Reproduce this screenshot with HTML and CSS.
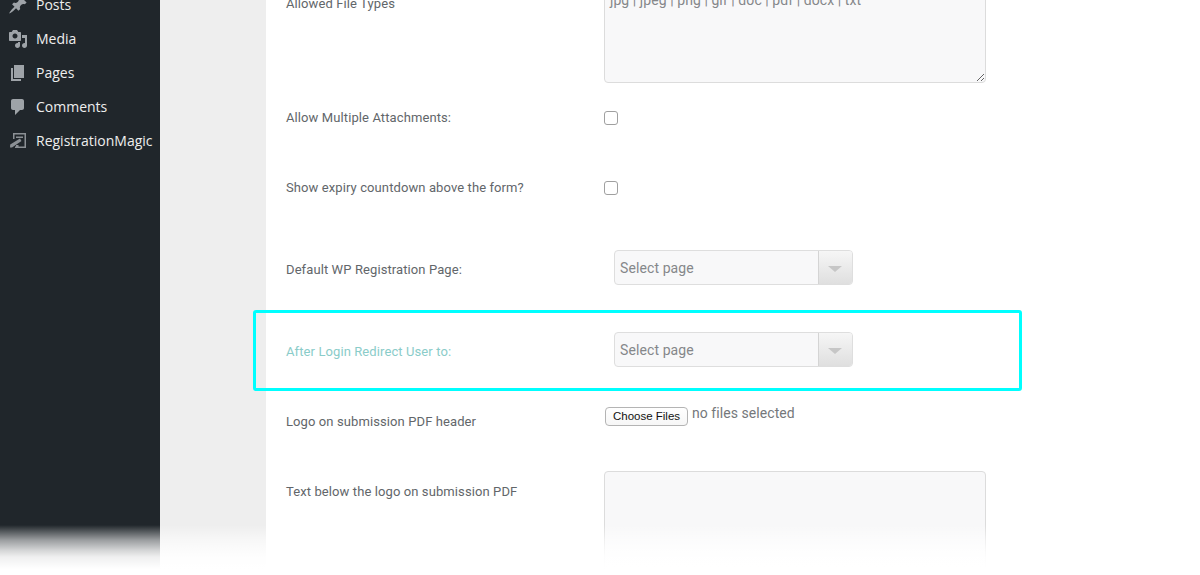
FILE: index.html
```html
<!DOCTYPE html>
<html lang="en">
<head>
<meta charset="utf-8">
<title>Global Settings</title>
<link rel="stylesheet" href="styles.css">
</head>
<body>
<div class="page">
  <nav class="sidebar">
    <ul class="menu">
      <li class="menu-item"><svg class="menu-icon" viewBox="0 0 20 20"><path d="M10.44 3.02l1.82-1.82 6.36 6.35-1.83 1.82c-1.05-.68-2.48-.57-3.41.36l-.75.75c-.92.93-1.04 2.35-.35 3.41l-1.83 1.82-2.41-2.41-2.8 2.79c-.42.42-3.38 2.71-3.8 2.29s1.86-3.39 2.28-3.81l2.79-2.79L4.1 9.36l1.83-1.82c1.05.69 2.48.57 3.4-.36l.75-.75c.93-.92 1.05-2.35.36-3.41z"/></svg>Posts</li>
      <li class="menu-item"><svg class="menu-icon" viewBox="0 0 20 20"><path d="M13 11V4c0-.55-.45-1-1-1h-1.67L9 1H5L3.67 3H2c-.55 0-1 .45-1 1v7c0 .55.45 1 1 1h10c.55 0 1-.45 1-1zM7 4.5c1.38 0 2.5 1.12 2.5 2.5S8.38 9.5 7 9.5 4.5 8.38 4.5 7 5.62 4.5 7 4.5zM14 6h5v10.5c0 1.38-1.12 2.5-2.5 2.5S14 17.88 14 16.5s1.12-2.5 2.5-2.5c.17 0 .34.02.5.05V9h-3V6zm-4 8.05V13h2v3.5c0 1.38-1.12 2.5-2.5 2.5S7 17.88 7 16.5 8.12 14 9.5 14c.17 0 .34.02.5.05z"/></svg>Media</li>
      <li class="menu-item"><svg class="menu-icon" viewBox="0 0 20 20"><path d="M6 15V2h10v13H6zm-1 1h8v2H3V5h2v11z"/></svg>Pages</li>
      <li class="menu-item"><svg class="menu-icon" viewBox="0 0 20 20"><path d="M5 2h9c1.1 0 2 .9 2 2v7c0 1.1-.9 2-2 2h-2l-5 5v-5H5c-1.1 0-2-.9-2-2V4c0-1.1.9-2 2-2z"/></svg>Comments</li>
      <li class="menu-item"><svg class="menu-icon rm-icon" viewBox="0 0 20 20"><path d="M4 2h13v15H6v-1.500h9.500V3.500h-10V8H4zM7 5.500h7V7H7zM1.200 13.500L11 7.500l1.500 2.500L3 16.500H1zM7 14h2.500v1.500H7z"/></svg>RegistrationMagic</li>
    </ul>
  </nav>
  <div class="gutter"></div>
  <main class="content">
    <form class="form">
      <div class="row row-types">
        <label class="label label-types">Allowed File Types</label>
        <textarea class="area area-types" readonly>jpg | jpeg | png | gif | doc | pdf | docx | txt</textarea>
      </div>
      <div class="row row-multi">
        <label class="label">Allow Multiple Attachments:</label>
        <input class="check" type="checkbox">
      </div>
      <div class="row row-expiry">
        <label class="label">Show expiry countdown above the form?</label>
        <input class="check" type="checkbox">
      </div>
      <div class="row row-reg">
        <label class="label label-low">Default WP Registration Page:</label>
        <div class="select"><span class="select-text">Select page</span><span class="select-arrow"></span></div>
      </div>
      <div class="row row-login">
        <label class="label label-low label-teal">After Login Redirect User to:</label>
        <div class="select"><span class="select-text">Select page</span><span class="select-arrow"></span></div>
      </div>
      <div class="row row-logo">
        <label class="label label-logo">Logo on submission PDF header</label>
        <div class="file">
          <button class="file-button" type="button">Choose Files</button>
          <span class="file-text">no files selected</span>
        </div>
      </div>
      <div class="row row-text">
        <label class="label label-text">Text below the logo on submission PDF</label>
        <textarea class="area area-text" readonly></textarea>
      </div>
    </form>
  </main>
  <div class="highlight"></div>
  <div class="fade"></div>
</div>
</body>
</html>
```

FILE: styles.css
```css
* { box-sizing: border-box; }

html, body {
  margin: 0;
  height: 575px;
  overflow: hidden;
  background: #fff;
}

.page {
  position: relative;
  display: flex;
  width: 1200px;
  height: 575px;
  overflow: hidden;
  font-family: Roboto, "Liberation Sans", sans-serif;
}

.sidebar {
  flex: 0 0 160px;
  background: #20262b;
}

.menu {
  list-style: none;
  margin: -12px 0 0;
  padding: 0;
}

.menu-item {
  display: flex;
  align-items: center;
  height: 34px;
  padding-left: 8px;
  font: 14px/34px "Open Sans", sans-serif;
  color: #eeeeee;
}

.menu-icon {
  flex: none;
  width: 20px;
  height: 20px;
  margin-right: 8px;
  fill: #9ea3a8;
}

.rm-icon { margin-left: 1px; margin-right: 7px; fill: #8b9095; }

.gutter {
  flex: 0 0 106px;
  background: #eeeeee;
}

.content {
  flex: 1;
  background: #fff;
  padding-left: 20px;
}

.form {
  margin-top: -18px;
}

.row {
  display: grid;
  grid-template-columns: 318px 382px;
  align-items: center;
}

.row-types { height: 101px; align-items: start; }
.row-multi { height: 69px; }
.row-expiry { height: 71px; }
.row-reg { height: 89px; }
.row-login { height: 75px; }
.row-logo { height: 84px; align-items: start; }
.row-text { height: 120px; align-items: start; }

.label {
  font-size: 13px;
  line-height: 20px;
  letter-spacing: 0.1px;
  color: #62666a;
}

.label-types { padding-top: 12px; }
.label-low { padding-top: 5px; }
.label-logo { padding-top: 25px; }
.label-text { padding-top: 11px; }
.label-teal { color: #8accc9; }

.area {
  display: block;
  width: 382px;
  margin: 0;
  padding: 6px 5px;
  border: 1px solid #dcdcdc;
  border-radius: 4px;
  background: #f8f8f9;
  font: 14px/20px Roboto, sans-serif;
  letter-spacing: 0.07px;
  color: #85878a;
  outline: none;
}

.area-types { height: 101px; padding-top: 7px; }
.area-text { height: 120px; }

.check {
  appearance: none;
  display: block;
  width: 14px;
  height: 14px;
  margin: 0;
  border: 1px solid #a0a0a0;
  border-radius: 3px;
  background: #fff;
}

.select {
  display: flex;
  width: 239px;
  height: 35px;
  margin-left: 10px;
  border: 1px solid #dedede;
  border-radius: 4px;
  background: #f8f8f9;
  overflow: hidden;
}

.select-text {
  flex: 1;
  padding-left: 5px;
  font-size: 14px;
  line-height: 35px;
  letter-spacing: 0.1px;
  color: #85878a;
}

.select-arrow {
  position: relative;
  flex: 0 0 34px;
  border-left: 1px solid #d4d4d4;
  background: linear-gradient(#f6f6f6, #dfdfdf);
}

.select-arrow::after {
  content: "";
  position: absolute;
  left: 9px;
  top: 15px;
  border-style: solid;
  border-width: 6px 7px 0;
  border-color: #c6c6c6 transparent transparent;
}

.file {
  display: flex;
  align-items: flex-start;
  padding-top: 17px;
}

.file-button {
  width: 83px;
  height: 19px;
  margin: 3px 4px 0 1px;
  padding: 0;
  border: 1px solid #b4b4b4;
  border-radius: 4px;
  background: linear-gradient(#ffffff, #f6f6f6);
  font: 11.500px/17px "Liberation Sans", sans-serif;
  color: #111;
}

.file-text {
  font-size: 14px;
  line-height: 18px;
  letter-spacing: 0.06px;
  color: #75787b;
}

.highlight {
  position: absolute;
  left: 253px;
  top: 310px;
  width: 769px;
  height: 81px;
  border: 3px solid #00ffff;
  border-radius: 3px;
  pointer-events: none;
}

.fade {
  position: absolute;
  left: 0;
  right: 0;
  top: 525px;
  bottom: 0;
  background: linear-gradient(
    rgba(255, 255, 255, 0) 0,
    rgba(255, 255, 255, 0.55) 15px,
    rgba(255, 255, 255, 0.8) 25px,
    rgba(255, 255, 255, 0.93) 32px,
    #ffffff 44px
  );
  pointer-events: none;
}
```
